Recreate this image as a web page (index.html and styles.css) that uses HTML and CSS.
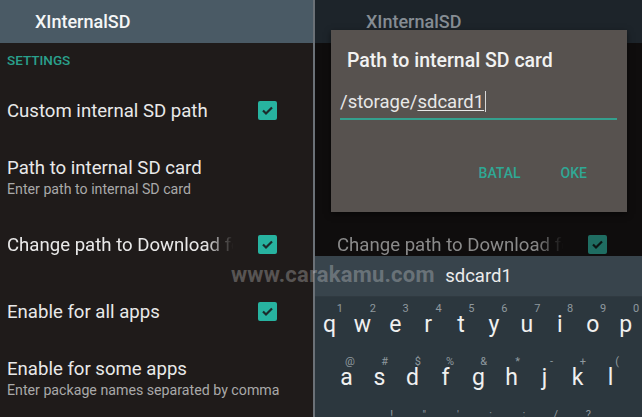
FILE: index.html
```html
<!DOCTYPE html>
<html lang="en">
<head>
    <meta charset="UTF-8">
    <meta name="viewport" content="width=device-width, initial-scale=1.0">
    <title>XInternalSD</title>
    <link rel="stylesheet" href="styles.css">
</head>
<body>

    <!-- Left screen: settings list -->
    <div class="phone phone-left">
        <div class="toolbar"><span class="toolbar-title">XInternalSD</span></div>
        <div class="list">
            <div class="category">SETTINGS</div>
            <div class="pref">
                <div class="pref-text"><div class="pref-title">Custom internal SD path</div></div>
                <span class="check"><svg viewBox="0 0 19 19"><path d="M5 9.5l3 3 6-6"/></svg></span>
            </div>
            <div class="pref">
                <div class="pref-text">
                    <div class="pref-title">Path to internal SD card</div>
                    <div class="pref-sub">Enter path to internal SD card</div>
                </div>
            </div>
            <div class="pref">
                <div class="pref-text fade"><div class="pref-title">Change path to Download folder</div></div>
                <span class="check"><svg viewBox="0 0 19 19"><path d="M5 9.5l3 3 6-6"/></svg></span>
            </div>
            <div class="pref">
                <div class="pref-text"><div class="pref-title">Enable for all apps</div></div>
                <span class="check"><svg viewBox="0 0 19 19"><path d="M5 9.5l3 3 6-6"/></svg></span>
            </div>
            <div class="pref">
                <div class="pref-text wide">
                    <div class="pref-title">Enable for some apps</div>
                    <div class="pref-sub">Enter package names separated by comma</div>
                </div>
            </div>
        </div>
    </div>

    <div class="divider"></div>

    <!-- Right screen: dialog + keyboard -->
    <div class="phone phone-right">
        <div class="toolbar dim"><span class="toolbar-title">XInternalSD</span></div>
        <div class="list dim">
            <div class="category">SETTINGS</div>
            <div class="pref"><div class="pref-text"><div class="pref-title">Custom internal SD path</div></div></div>
            <div class="pref"><div class="pref-text"><div class="pref-title">Path to internal SD card</div></div></div>
            <div class="pref">
                <div class="pref-text fade"><div class="pref-title">Change path to Download folder</div></div>
                <span class="check"><svg viewBox="0 0 19 19"><path d="M5 9.5l3 3 6-6"/></svg></span>
            </div>
        </div>

        <div class="keyboard">
            <div class="suggest">
                <span></span>
                <span class="suggest-word">sdcard1</span>
                <span></span>
            </div>
            <div class="keys">
                <div class="key-row">
                    <div class="key">q<i>1</i></div><div class="key">w<i>2</i></div><div class="key">e<i>3</i></div>
                    <div class="key">r<i>4</i></div><div class="key">t<i>5</i></div><div class="key">y<i>6</i></div>
                    <div class="key">u<i>7</i></div><div class="key">i<i>8</i></div><div class="key">o<i>9</i></div>
                    <div class="key">p<i>0</i></div>
                </div>
                <div class="key-row row2">
                    <div class="key">a<i>@</i></div><div class="key">s<i>#</i></div><div class="key">d<i>$</i></div>
                    <div class="key">f<i>%</i></div><div class="key">g<i>&amp;</i></div><div class="key">h<i>*</i></div>
                    <div class="key">j<i>-</i></div><div class="key">k<i>+</i></div><div class="key">l<i>(</i></div>
                </div>
                <div class="key-row row3">
                    <div class="key">z<i>!</i></div><div class="key">x<i>"</i></div><div class="key">c<i>'</i></div>
                    <div class="key">v<i>:</i></div><div class="key">b<i>;</i></div><div class="key">n<i>/</i></div>
                    <div class="key">m<i>?</i></div>
                </div>
            </div>
        </div>

        <div class="dialog">
            <div class="dialog-title">Path to internal SD card</div>
            <div class="dialog-input">/storage/<u>sdcard1</u><span class="cursor"></span></div>
            <div class="dialog-actions">
                <span class="dialog-btn">BATAL</span>
                <span class="dialog-btn">OKE</span>
            </div>
        </div>
    </div>

    <div class="watermark">www.carakamu.com</div>

</body>
</html>
```

FILE: styles.css
```css
body { margin: 0; width: 642px; height: 417px; overflow: hidden; display: flex; background: #1e1a19; font-family: Roboto, "Liberation Sans", sans-serif; position: relative; }

.phone { height: 417px; overflow: hidden; display: flex; flex-direction: column; position: relative; }
.phone-left { width: 313px; background: #1f1b1a; }
.phone-right { width: 327px; background: #0f0d0d; }
.divider { width: 2px; background: #6b7177; }

.toolbar { height: 43px; flex: none; background: #4a5a65; display: flex; align-items: center; padding-left: 35px; box-sizing: border-box; }
.toolbar-title { color: #f4f6f7; font-size: 18px; font-weight: 500; }
.toolbar.dim { background: #1d242a; padding-left: 51px; }
.toolbar.dim .toolbar-title { color: #868d94; }

.list { flex: none; padding-left: 7px; }
.list.dim { height: 213px; overflow: hidden; padding-left: 22px; }
.category { height: 34px; display: flex; align-items: center; color: #2aa08c; font-size: 13.5px; font-weight: 500; }
.pref { height: 67px; display: flex; align-items: center; }
.pref-text { width: 231px; overflow: hidden; white-space: nowrap; }
.pref-text.wide { width: 300px; }
.pref-text.fade { -webkit-mask-image: linear-gradient(to right, #000 86%, transparent 98%); mask-image: linear-gradient(to right, #000 86%, transparent 98%); }
.pref-title { color: #e9e9e9; font-size: 18.6px; line-height: 22px; }
.pref-sub { color: #a9a9a9; font-size: 14.2px; line-height: 20px; }
.dim .pref-title { color: #8a8a8a; }

.check { width: 19px; height: 19px; margin-left: 20px; background: #27b3a0; border-radius: 2px; display: flex; }
.check svg { width: 19px; height: 19px; }
.check path { fill: none; stroke: #1c2b2b; stroke-width: 2.2; }
.dim .check { background: #1f6d62; }
.dim .check path { stroke: #0c1514; }

.keyboard { flex: 1; display: flex; flex-direction: column; }
.suggest { height: 40px; background: #38444c; display: grid; grid-template-columns: 1fr 1fr 1fr; align-items: center; border-bottom: 1px solid #303a41; }
.suggest-word { color: #ececec; font-size: 18.5px; text-align: center; }
.keys { flex: 1; background: #2c373e; }
.key-row { height: 53px; display: flex; margin-left: -2px; }
.row2 { padding-left: 17px; }
.row3 { padding-left: 50px; }
.key { width: 33px; height: 53px; box-sizing: border-box; padding-top: 14px; text-align: center; color: #f0f0f0; font-size: 23px; position: relative; }
.key i { position: absolute; top: 5px; right: 3px; font-style: normal; font-size: 11px; color: #8f999f; }
.row2 .key i { right: 8px; }

.dialog { position: absolute; top: 30px; left: 16px; width: 296px; height: 182px; background: #57524f; box-shadow: 0 2px 6px rgba(0, 0, 0, 0.5); }
.dialog-title { color: #f2f2f2; font-size: 19.5px; font-weight: 500; padding: 20px 0 0 16px; line-height: 22px; }
.dialog-input { margin: 19px 10px 0 9px; padding-bottom: 5px; border-bottom: 2px solid #34a08e; color: #e8e8e8; font-size: 18.5px; line-height: 22px; }
.dialog-input u { text-decoration-thickness: 1px; text-underline-offset: 2px; }
.cursor { display: inline-block; width: 1px; height: 21px; background: #d8d8d8; vertical-align: -4px; margin-left: 1px; }
.dialog-actions { display: flex; justify-content: flex-end; gap: 40px; padding: 45px 40px 0 0; }
.dialog-btn { color: #2fa895; font-size: 14px; font-weight: 500; }

.watermark { position: absolute; left: 231px; top: 262px; color: rgba(255, 255, 255, 0.26); font-size: 22px; font-weight: 700; letter-spacing: 0.2px; }
```
